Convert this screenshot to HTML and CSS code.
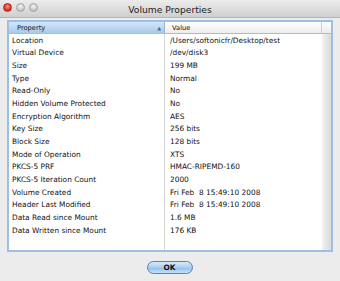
FILE: index.html
```html
<!DOCTYPE html>
<html>
<head>
<meta charset="utf-8">
<link rel="stylesheet" href="styles.css">
</head>
<body>
<div class="window">
  <div class="titlebar">
    <div class="lights">
      <span class="light red"></span>
      <span class="light gray"></span>
      <span class="light gray"></span>
    </div>
    <div class="title">Volume Properties</div>
  </div>
  <div class="content">
    <div class="ring">
      <div class="table">
        <div class="thead">
          <div class="th th-prop"><span>Property</span><span class="sort">▲</span></div>
          <div class="th th-val">Value</div>
          <div class="th th-fill"></div>
        </div>
        <div class="tbody">
          <div class="row"><span class="c1">Location</span><span class="c2">/Users/softonicfr/Desktop/test</span></div>
          <div class="row"><span class="c1">Virtual Device</span><span class="c2">/dev/disk3</span></div>
          <div class="row"><span class="c1">Size</span><span class="c2">199 MB</span></div>
          <div class="row"><span class="c1">Type</span><span class="c2">Normal</span></div>
          <div class="row"><span class="c1">Read-Only</span><span class="c2">No</span></div>
          <div class="row"><span class="c1">Hidden Volume Protected</span><span class="c2">No</span></div>
          <div class="row"><span class="c1">Encryption Algorithm</span><span class="c2">AES</span></div>
          <div class="row"><span class="c1">Key Size</span><span class="c2">256 bits</span></div>
          <div class="row"><span class="c1">Block Size</span><span class="c2">128 bits</span></div>
          <div class="row"><span class="c1">Mode of Operation</span><span class="c2">XTS</span></div>
          <div class="row"><span class="c1">PKCS-5 PRF</span><span class="c2">HMAC-RIPEMD-160</span></div>
          <div class="row"><span class="c1">PKCS-5 Iteration Count</span><span class="c2">2000</span></div>
          <div class="row"><span class="c1">Volume Created</span><span class="c2">Fri Feb&nbsp; 8 15:49:10 2008</span></div>
          <div class="row"><span class="c1">Header Last Modified</span><span class="c2">Fri Feb&nbsp; 8 15:49:10 2008</span></div>
          <div class="row"><span class="c1">Data Read since Mount</span><span class="c2">1.6 MB</span></div>
          <div class="row"><span class="c1">Data Written since Mount</span><span class="c2">176 KB</span></div>
        </div>
      </div>
    </div>
    <div class="buttons">
      <button class="ok">OK</button>
    </div>
  </div>
</div>
</body>
</html>
```
FILE: styles.css
```css
html, body {
  margin: 0;
  padding: 0;
}
body {
  width: 340px;
  height: 281px;
  overflow: hidden;
  background: #ececec;
  font-family: "DejaVu Sans", Verdana, sans-serif;
  color: #111;
}
.window {
  width: 340px;
  height: 281px;
  display: flex;
  flex-direction: column;
}
.titlebar {
  height: 18px;
  flex: none;
  background: linear-gradient(#ececec, #cfcfcf);
  border-bottom: 1px solid #b5b5b5;
  display: grid;
  grid-template-columns: 1fr auto 1fr;
  align-items: center;
  box-sizing: border-box;
}
.lights {
  display: flex;
  gap: 4px;
  padding-left: 3px;
  align-items: center;
  margin-top: -3px;
}
.light {
  width: 9px;
  height: 9px;
  border-radius: 50%;
  box-sizing: border-box;
}
.red {
  background: radial-gradient(circle at 50% 35%, #ff8c7c 0%, #e23b2c 55%, #9c1a10 100%);
  border: 1px solid #a8281c;
}
.gray {
  background: radial-gradient(circle at 50% 35%, #f2f2f2 0%, #cfcfcf 55%, #a8a8a8 100%);
  border: 1px solid #a5a5a5;
}
.title {
  font-size: 9.2px;
  color: #222;
  margin-top: 1px;
}
.content {
  flex: 1;
  display: flex;
  flex-direction: column;
  padding: 2px 7px 0 7px;
}
.ring {
  border: 2px solid #9dbfe3;
  height: 228px;
  box-sizing: content-box;
  background: #fff;
}
.table {
  height: 228px;
  display: flex;
  flex-direction: column;
  font-size: 7.4px;
}
.thead {
  height: 12px;
  flex: none;
  display: grid;
  grid-template-columns: 156px 157px 1fr;
  border-bottom: 1px solid #b9b9b9;
  box-sizing: border-box;
  font-size: 6.7px;
}
.th {
  display: flex;
  align-items: center;
  background: linear-gradient(#ffffff, #ececec);
  border-right: 1px solid #cfcfcf;
}
.th-prop {
  background: linear-gradient(#d4e6f8, #a7c9ec);
  justify-content: space-between;
  padding-left: 8px;
  padding-right: 3px;
  border-right: 1px solid #9fb4ca;
}
.sort {
  font-size: 5px;
  color: #4c6a8c;
}
.th-val {
  padding-left: 7px;
}
.th-fill {
  border-right: none;
}
.tbody {
  flex: 1;
  background:
    linear-gradient(to right, transparent 155px, #d6d6d6 155px, #d6d6d6 156px, transparent 156px),
    linear-gradient(to right, transparent 313px, #f2f2f2 313px, #dcdcdc 321px);
}
.row {
  height: 12.67px;
  display: grid;
  grid-template-columns: 156px 1fr;
  align-items: center;
  white-space: nowrap;
}
.c1 {
  padding-left: 3px;
}
.c2 {
  padding-left: 5px;
}
.buttons {
  display: flex;
  justify-content: center;
  padding-top: 9px;
  padding-right: 1px;
}
.ok {
  width: 46px;
  height: 13px;
  border-radius: 7px;
  border: 1px solid #5d7fa8;
  background: linear-gradient(#d8ebfb 0%, #a9cdf0 50%, #8dbbe8 51%, #c6e2fb 100%);
  font-family: "DejaVu Sans", Verdana, sans-serif;
  font-size: 7.4px;
  font-weight: bold;
  color: #111;
  padding: 0;
  line-height: 11px;
}
```
